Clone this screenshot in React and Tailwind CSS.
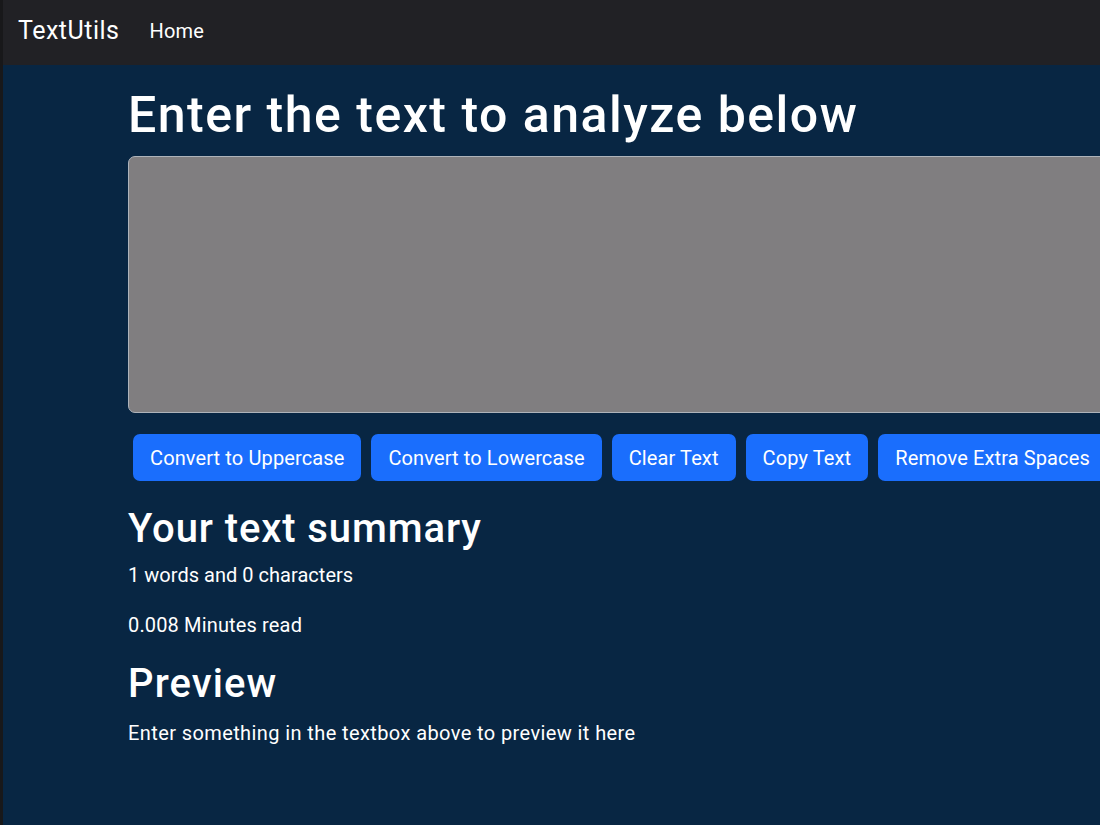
export default function App() {
  const buttons = [
    "Convert to Uppercase",
    "Convert to Lowercase",
    "Clear Text",
    "Copy Text",
    "Remove Extra Spaces",
  ];

  return (
    <div
      className="flex w-[1100px] h-[825px] overflow-hidden bg-[#082643] text-white"
      style={{ fontFamily: "Roboto, 'Noto Sans', sans-serif" }}
    >
      {/* thin dark window edge */}
      <div className="w-[3px] shrink-0 bg-[#18181a]" />

      <div className="flex flex-col flex-1 min-w-0">
        {/* navbar */}
        <nav className="flex items-center h-[65px] shrink-0 bg-[#212125] px-[15px] pb-[4px]">
          <span className="text-[25px] leading-none text-white mr-[20px] tracking-[0.5px]">TextUtils</span>
          <span className="text-[20px] leading-none text-white px-[10px] tracking-[0.2px]">Home</span>
        </nav>

        {/* main content */}
        <main className="pl-[125px] pt-[20px] w-[1250px]">
          <h1 className="text-[50px] leading-[60px] font-medium mb-[11px] tracking-[1.5px]">
            Enter the text to analyze below
          </h1>

          <textarea
            className="block w-full h-[257px] bg-[#807e80] border border-[#aeb3ba] rounded-[7px] resize-none outline-none"
            readOnly
          />

          <div className="flex mt-[21px]">
            {buttons.map((b) => (
              <button
                key={b}
                className="mx-[5px] h-[47px] px-[17px] rounded-[7px] bg-[#1a6efd] text-white text-[20px] leading-none whitespace-nowrap tracking-[0.12px]"
              >
                {b}
              </button>
            ))}
          </div>

          <section className="mt-[24px]">
            <h2 className="text-[40px] leading-[48px] font-medium mb-[7px] tracking-[0.9px]">Your text summary</h2>
            <p className="text-[20px] leading-[30px] mb-[20px] tracking-[0.03px]">1 words and 0 characters</p>
            <p className="text-[20px] leading-[30px] mb-[20px] tracking-[0.15px]">0.008 Minutes read</p>
            <h2 className="text-[40px] leading-[48px] font-medium mb-[10px] tracking-[1.1px]">Preview</h2>
            <p className="text-[20px] leading-[30px] tracking-[0.4px]">
              Enter something in the textbox above to preview it here
            </p>
          </section>
        </main>
      </div>
    </div>
  );
}
